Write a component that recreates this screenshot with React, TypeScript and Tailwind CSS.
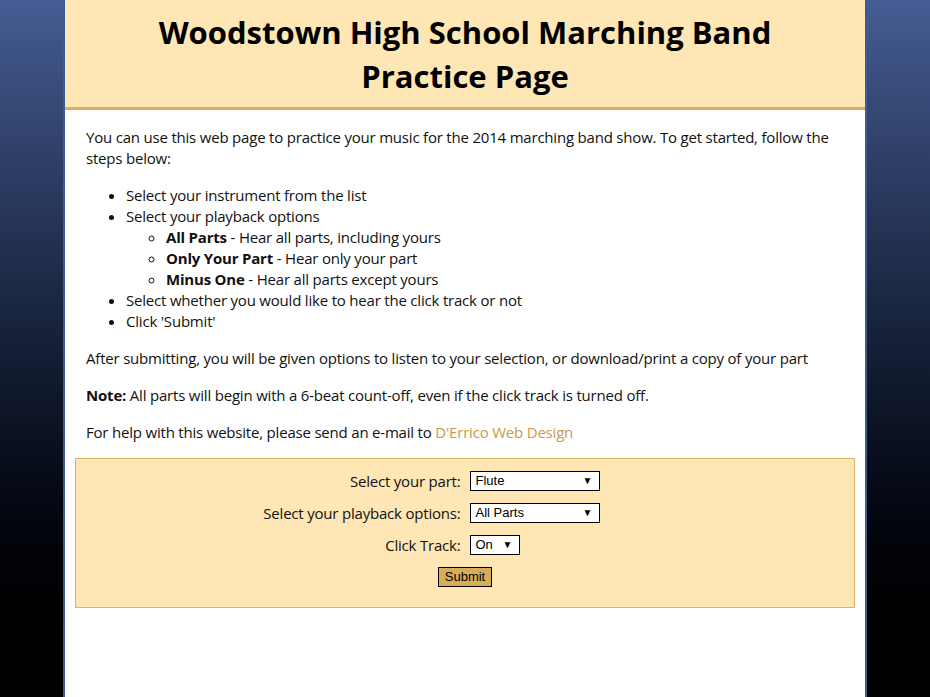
import React from "react";

const steps = [
  { bold: "All Parts", text: " - Hear all parts, including yours" },
  { bold: "Only Your Part", text: " - Hear only your part" },
  { bold: "Minus One", text: " - Hear all parts except yours" },
];

function FakeSelect(props: { value: string; width: string }) {
  return (
    <div
      className={`flex h-[20px] ${props.width} items-center justify-between border border-black bg-white pl-[5px] pr-[6px] font-['Liberation_Sans',Arial,sans-serif] text-[13px] leading-[18px] tracking-normal text-black`}
    >
      <span>{props.value}</span>
      <span className="text-[10px] leading-[10px]">▼</span>
    </div>
  );
}

export default function App() {
  return (
    <div className="min-h-screen bg-gradient-to-b from-[#455d94] to-[#000000] font-['Open_Sans',sans-serif]">
      <div className="mx-auto min-h-screen w-[804px] border-x-2 border-[#3f5a99] bg-white">
        <header className="border-b-[3px] border-[#dcae5c] bg-[#ffe7b5] pb-[9px] pt-[10px] text-center">
          <h1 className="text-[31px] font-bold leading-[44px] text-black">
            Woodstown High School Marching Band
            <br />
            Practice Page
          </h1>
        </header>

        <main className="px-[10px] pb-[20px] text-[15px] leading-[21px] tracking-[-0.2px] text-[#111]">
          <div className="px-[11px]">
            <p className="my-[16px] pt-[1px]">
              <span className="whitespace-nowrap">
                You can use this web page to practice your music for the 2014 marching band show. To get
                started, follow the
              </span>
              <br />
              steps below:
            </p>
            <ul className="my-[16px] list-disc pl-[40px]">
              <li>Select your instrument from the list</li>
              <li>
                Select your playback options
                <ul className="list-[circle] pl-[40px]">
                  {steps.map((s) => (
                    <li key={s.bold}>
                      <b>{s.bold}</b>
                      {s.text}
                    </li>
                  ))}
                </ul>
              </li>
              <li>Select whether you would like to hear the click track or not</li>
              <li>Click 'Submit'</li>
            </ul>
            <p className="my-[16px]">
              After submitting, you will be given options to listen to your selection, or download/print a
              copy of your part
            </p>
            <p className="my-[16px]">
              <b>Note:</b> All parts will begin with a 6-beat count-off, even if the click track is turned off.
            </p>
            <p className="mb-[15px] mt-[16px]">
              For help with this website, please send an e-mail to{" "}
              <a href="#" className="text-[#c9994f]">
                D'Errico Web Design
              </a>
            </p>
          </div>

          <form className="grid grid-cols-2 items-center gap-x-[9px] gap-y-[12px] border border-[#dcb265] bg-[#ffe7b5] pb-[20px] pt-[12px]">
            <label className="text-right leading-[20px]">Select your part:</label>
            <FakeSelect value="Flute" width="w-[130px]" />
            <label className="text-right leading-[20px]">Select your playback options:</label>
            <FakeSelect value="All Parts" width="w-[130px]" />
            <label className="text-right leading-[20px]">Click Track:</label>
            <FakeSelect value="On" width="w-[50px]" />
            <div className="col-span-2 flex justify-center">
              <button
                type="button"
                className="h-[20px] border border-black bg-[#d8ac58] px-[6px] font-['Liberation_Sans',Arial,sans-serif] text-[13px] leading-[18px] tracking-normal text-black"
              >
                Submit
              </button>
            </div>
          </form>
        </main>
      </div>
    </div>
  );
}
